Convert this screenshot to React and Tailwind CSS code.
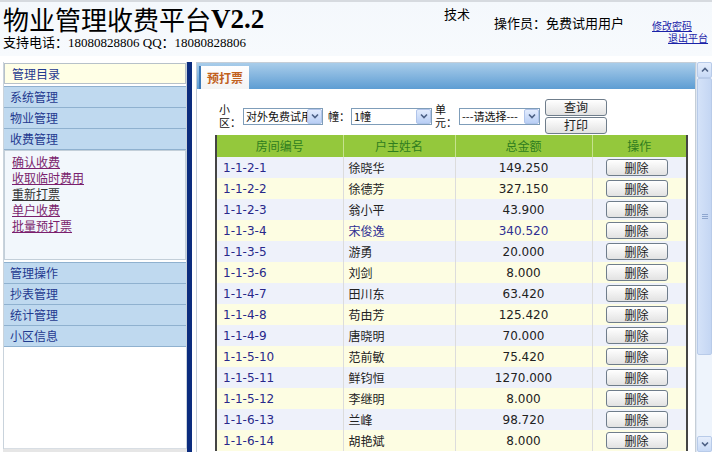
const rows = [
  ["1-1-2-1", "徐晓华", "149.250"],
  ["1-1-2-2", "徐德芳", "327.150"],
  ["1-1-2-3", "翁小平", "43.900"],
  ["1-1-3-4", "宋俊逸", "340.520", true],
  ["1-1-3-5", "游勇", "20.000"],
  ["1-1-3-6", "刘剑", "8.000"],
  ["1-1-4-7", "田川东", "63.420"],
  ["1-1-4-8", "苟由芳", "125.420"],
  ["1-1-4-9", "唐晓明", "70.000"],
  ["1-1-5-10", "范前敏", "75.420"],
  ["1-1-5-11", "鲜钧恒", "1270.000"],
  ["1-1-5-12", "李继明", "8.000"],
  ["1-1-6-13", "兰峰", "98.720"],
  ["1-1-6-14", "胡艳斌", "8.000"],
];

const cjk = "font-['Noto_Sans_CJK_SC',sans-serif]";

function MenuItem({ label }) {
  return (
    <div className="h-[21px] flex items-center pl-[6px] bg-[#bfd9ef] border-b border-[#8fb1cf] text-[12px] text-[#1f3a8f]">
      {label}
    </div>
  );
}

function FakeSelect({ text, width }) {
  return (
    <div
      className="h-[17px] flex items-center bg-white border border-[#7f9db9] text-[11px] text-[#111]"
      style={{ width }}
    >
      <span className="flex-1 pl-[2px] overflow-hidden whitespace-nowrap leading-[14px]">{text}</span>
      <span className="w-[15px] h-[15px] flex items-center justify-center bg-gradient-to-b from-[#e3ecfd] to-[#b9cff5] border border-[#b0c4ea] rounded-[2px]">
        <svg width="8" height="6" viewBox="0 0 8 6">
          <path d="M1 1.5 L4 4.5 L7 1.5" stroke="#4d6185" strokeWidth="1.6" fill="none" />
        </svg>
      </span>
    </div>
  );
}

function Btn({ label, className = "" }) {
  return (
    <div
      className={`w-[62px] h-[17px] flex items-center justify-center rounded-[3px] border border-[#6f7d8b] bg-gradient-to-b from-white to-[#e2e2e2] text-[12px] text-[#222] leading-none ${className}`}
    >
      {label}
    </div>
  );
}

export default function App() {
  return (
    <div className={`w-[712px] h-[452px] overflow-hidden bg-white flex flex-col ${cjk}`}>
      {/* header */}
      <div className="h-[56px] border-t-2 border-[#d6dadf] bg-gradient-to-b from-[#f4f8fc] to-[#f7fafd] flex">
        <div className="w-[444px] pl-[3px] flex flex-col">
          <div className="h-[31px] flex items-end text-[26px] leading-[28px] text-black">
            物业管理收费平台
            <span className="font-['Liberation_Serif',serif] font-bold text-[27px]">V2.2</span>
          </div>
          <div className="text-[13px] leading-[16px] text-black mt-[1px]">
            支持电话：<span className="font-['Liberation_Serif',serif]">18080828806 QQ</span>：
            <span className="font-['Liberation_Serif',serif]">18080828806</span>
          </div>
        </div>
        <div className="pt-[3px] text-[13px] leading-[18px] text-black">技术</div>
        <div className="ml-[24px] pt-[12px] text-[13px] leading-[18px] text-black">操作员：免费试用用户</div>
        <div className="ml-[28px] w-[56px] pt-[18px] flex flex-col items-end text-[10px] leading-[12px] text-[#1a22a8]">
          <span className="underline mr-[16px]">修改密码</span>
          <span className="underline">退出平台</span>
        </div>
      </div>
      <div className="h-[6px] bg-white" />

      {/* body */}
      <div className="flex-1 flex min-h-0">
        {/* sidebar */}
        <div className="w-[187px] pl-[3px] flex flex-col">
          <div className="flex-1 flex flex-col border-l border-r border-[#c9d3dc] pt-[1px]">
            <div className="h-[21px] flex items-center pl-[7px] bg-[#ffffe6] border border-[#b7c1c9] text-[12px] text-[#1f3a8f]">
              管理目录
            </div>
            <div className="h-[2px]" />
            <div className="border-t border-[#8fb1cf]">
              <MenuItem label="系统管理" />
              <MenuItem label="物业管理" />
              <MenuItem label="收费管理" />
            </div>
            <div className="h-[110px] bg-[#f2f7fc] border border-[#c3cfd9] pt-[3px] pl-[7px] flex flex-col text-[12px] leading-[16px]">
              <span className="underline text-[#7b1f6e]">确认收费</span>
              <span className="underline text-[#7b1f6e]">收取临时费用</span>
              <span className="underline text-[#333]">重新打票</span>
              <span className="underline text-[#7b1f6e]">单户收费</span>
              <span className="underline text-[#7b1f6e]">批量预打票</span>
            </div>
            <div className="h-[2px]" />
            <div className="border-t border-[#8fb1cf]">
              <MenuItem label="管理操作" />
              <MenuItem label="抄表管理" />
              <MenuItem label="统计管理" />
              <MenuItem label="小区信息" />
            </div>
            <div className="flex-1 border-b border-[#d8dee4]" />
          </div>
          <div className="h-[3px] bg-[#e6e6e6]" />
        </div>

        {/* navy divider */}
        <div className="w-[5px] bg-[#0b2c7e]" />
        <div className="w-[4px]" />

        {/* main */}
        <div className="w-[500px] flex flex-col border border-[#c5ced7] border-b-0">
          <div className="h-[26px] bg-gradient-to-b from-[#a9cdea] to-[#5d9dd3] pl-[2px] pt-[3px] flex">
            <div className="w-[50px] h-[23px] flex items-center justify-center bg-gradient-to-b from-white to-[#f3f3f3] border-l-2 border-[#3d7ab8] text-[12px] font-bold text-[#c2611c]">
              预打票
            </div>
          </div>

          <div className="pl-[19px] pt-[10px] flex flex-col">
            {/* filter row */}
            <div className="h-[34px] flex items-center text-[12px] text-[#111]">
              <div className="w-[24px] ml-[3px] flex flex-col text-[11px] leading-[13px]">
                <span>小</span>
                <span>区：</span>
              </div>
              <FakeSelect text="对外免费试用小区" width={80} />
              <span className="ml-[5px] w-[23px] text-[11px]">幢：</span>
              <FakeSelect text="1幢" width={81} />
              <div className="ml-[3px] w-[24px] flex flex-col text-[11px] leading-[13px]">
                <span>单</span>
                <span>元：</span>
              </div>
              <FakeSelect text="---请选择---" width={81} />
              <div className="ml-[5px] flex flex-col gap-[1px]">
                <Btn label="查询" />
                <Btn label="打印" />
              </div>
            </div>

            {/* table */}
            <table className="mt-[2px] -ml-[1px] w-[471px] border-collapse table-fixed border-l-2 border-r-2 border-[#444]">
              <colgroup>
                <col className="w-[127px]" />
                <col className="w-[112px]" />
                <col className="w-[137px]" />
                <col className="w-[95px]" />
              </colgroup>
              <thead>
                <tr className="h-[22px] bg-[#94c83c] text-[12px] text-[#2f7d1f]">
                  <th className="font-normal border-r border-[#c6e28e]">房间编号</th>
                  <th className="font-normal border-r border-[#c6e28e]">户主姓名</th>
                  <th className="font-normal border-r border-[#c6e28e]">总金额</th>
                  <th className="font-normal">操作</th>
                </tr>
              </thead>
              <tbody>
                {rows.map(([id, name, amt, blue], i) => (
                  <tr key={id} className={`h-[21px] ${i % 2 === 0 ? "bg-[#eef1fa]" : "bg-[#fdfde2]"}`}>
                    <td className="pl-[6px] border-r border-[#dcdcdc] text-[12px] text-[#28288a] font-['DejaVu_Sans',sans-serif]">
                      {id}
                    </td>
                    <td className={`pl-[5px] border-r border-[#dcdcdc] text-[12px] ${blue ? "text-[#2f2f92]" : "text-[#222]"}`}>
                      {name}
                    </td>
                    <td className={`text-center border-r border-[#dcdcdc] text-[12px] font-['DejaVu_Sans',sans-serif] ${blue ? "text-[#2f2f92]" : "text-[#222]"}`}>
                      {amt}
                    </td>
                    <td className="pl-[13px]">
                      <Btn label="删除" />
                    </td>
                  </tr>
                ))}
              </tbody>
            </table>
          </div>
        </div>

        {/* scrollbar */}
        <div className="w-[16px] flex flex-col bg-[#eef4fc] border-l border-[#dfe7f2]">
          <div className="h-[16px] flex items-center justify-center bg-gradient-to-b from-[#e6eefc] to-[#c8daf6] border border-[#b8cbe9] rounded-[2px]">
            <svg width="8" height="6" viewBox="0 0 8 6">
              <path d="M1 4.5 L4 1.5 L7 4.5" stroke="#4d6185" strokeWidth="1.6" fill="none" />
            </svg>
          </div>
          <div className="h-[277px] flex items-center justify-center bg-gradient-to-r from-[#d4e2f8] to-[#c4d6f3] border border-[#b8cbe9] rounded-[2px]">
            <div className="flex flex-col gap-[1px]">
              <div className="w-[6px] h-[1px] bg-[#8ea6cf]" />
              <div className="w-[6px] h-[1px] bg-[#8ea6cf]" />
              <div className="w-[6px] h-[1px] bg-[#8ea6cf]" />
            </div>
          </div>
          <div className="flex-1" />
          <div className="h-[16px] flex items-center justify-center bg-gradient-to-b from-[#e6eefc] to-[#c8daf6] border border-[#b8cbe9] rounded-[2px]">
            <svg width="8" height="6" viewBox="0 0 8 6">
              <path d="M1 1.5 L4 4.5 L7 1.5" stroke="#4d6185" strokeWidth="1.6" fill="none" />
            </svg>
          </div>
        </div>
      </div>
    </div>
  );
}
